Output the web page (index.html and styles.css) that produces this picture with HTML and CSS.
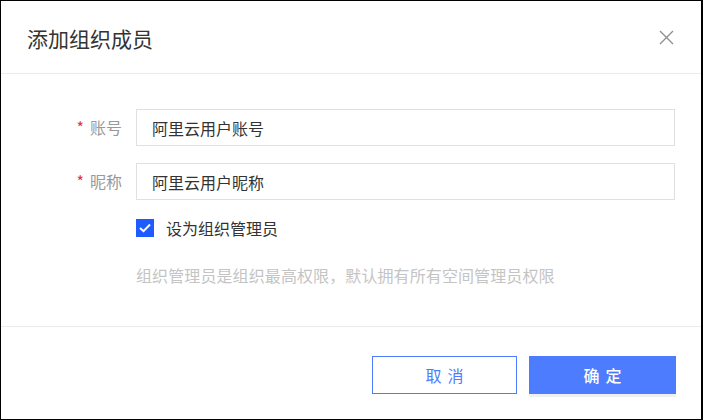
FILE: index.html
```html
<!DOCTYPE html>
<html lang="zh-CN">
<head>
    <meta charset="UTF-8">
    <meta name="viewport" content="width=device-width, initial-scale=1.0">
    <title>添加组织成员</title>
    <link rel="stylesheet" href="styles.css">
</head>
<body>
    <div class="dialog">
        <div class="dialog-header">
            <h2>添加组织成员</h2>
            <button class="close-btn" type="button" aria-label="关闭">
                <svg width="15" height="15" viewBox="0 0 15 15">
                    <path d="M1 1 L14 14 M14 1 L1 14" stroke="#8f8f8f" stroke-width="1.4" fill="none"/>
                </svg>
            </button>
        </div>

        <form class="dialog-body" id="member-form">
            <label class="form-label" for="account"><span class="required">*</span>账号</label>
            <input class="form-input" type="text" id="account" value="阿里云用户账号">

            <label class="form-label" for="nickname"><span class="required">*</span>昵称</label>
            <input class="form-input" type="text" id="nickname" value="阿里云用户昵称">

            <label class="check-row">
                <span class="check-box">
                    <svg width="12" height="10" viewBox="0 0 12 10">
                        <path d="M1 5 L4.5 8.2 L11 1.5" stroke="#fff" stroke-width="2" fill="none"/>
                    </svg>
                </span>
                设为组织管理员
            </label>

            <div class="hint">组织管理员是组织最高权限，默认拥有所有空间管理员权限</div>
        </form>

        <div class="dialog-footer">
            <button class="btn btn-cancel" type="button">取消</button>
            <button class="btn btn-ok" type="submit" form="member-form">确定</button>
        </div>
    </div>
</body>
</html>
```

FILE: styles.css
```css
* {
    box-sizing: border-box;
}
body {
    margin: 0;
    font-family: "Noto Sans CJK SC", "Noto Sans", sans-serif;
    background: #fff;
}
.dialog {
    width: 703px;
    height: 420px;
    border: 1px solid #000;
    border-right-width: 2px;
    display: flex;
    flex-direction: column;
}
.dialog-header {
    height: 73px;
    padding: 0 25px 0 26px;
    border-bottom: 1px solid #ebebeb;
    display: flex;
    align-items: center;
    justify-content: space-between;
}
.dialog-header h2 {
    margin: 0;
    font-size: 21px;
    font-weight: 400;
    color: #333;
    padding-top: 1px;
}
.close-btn {
    border: none;
    background: none;
    padding: 0;
    margin-right: 2px;
    cursor: pointer;
    display: flex;
}
.dialog-body {
    flex: 1;
    margin: 0;
    padding: 35px 26px 0 0;
    border-bottom: 1px solid #ebebeb;
    display: grid;
    grid-template-columns: 121px 1fr;
    column-gap: 14px;
    row-gap: 17px;
    align-content: start;
}
.form-label {
    font-size: 16px;
    color: #999;
    text-align: right;
    line-height: 37px;
}
.required {
    color: #e5333a;
    margin-right: 6px;
}
.form-input {
    height: 37px;
    border: 1px solid #e0e0e0;
    padding: 0 15px;
    font-family: inherit;
    font-size: 16px;
    color: #333;
    outline: none;
}
.check-row {
    grid-column: 2;
    display: flex;
    align-items: center;
    gap: 12px;
    font-size: 16px;
    color: #333;
    height: 20px;
    margin-top: 1px;
}
.check-box {
    width: 18px;
    height: 18px;
    background: #1f5cff;
    display: flex;
    align-items: center;
    justify-content: center;
}
.hint {
    grid-column: 2;
    font-size: 16px;
    letter-spacing: 0.1px;
    color: #c4c4c4;
    margin-top: 8px;
}
.dialog-footer {
    height: 92px;
    padding: 29px 25px 0 0;
    display: flex;
    justify-content: flex-end;
    align-items: flex-start;
    gap: 12px;
}
.btn {
    height: 38px;
    font-family: inherit;
    font-size: 16px;
    letter-spacing: 6px;
    text-indent: 6px;
    cursor: pointer;
}
.btn-cancel {
    width: 145px;
    background: #fff;
    border: 1px solid #4e7cfe;
    color: #4e7cfe;
}
.btn-ok {
    width: 147px;
    background: #4e7cfe;
    border: none;
    color: #fff;
    font-weight: 500;
    box-shadow: 0 3px 0 #f0f0f0;
}
```
